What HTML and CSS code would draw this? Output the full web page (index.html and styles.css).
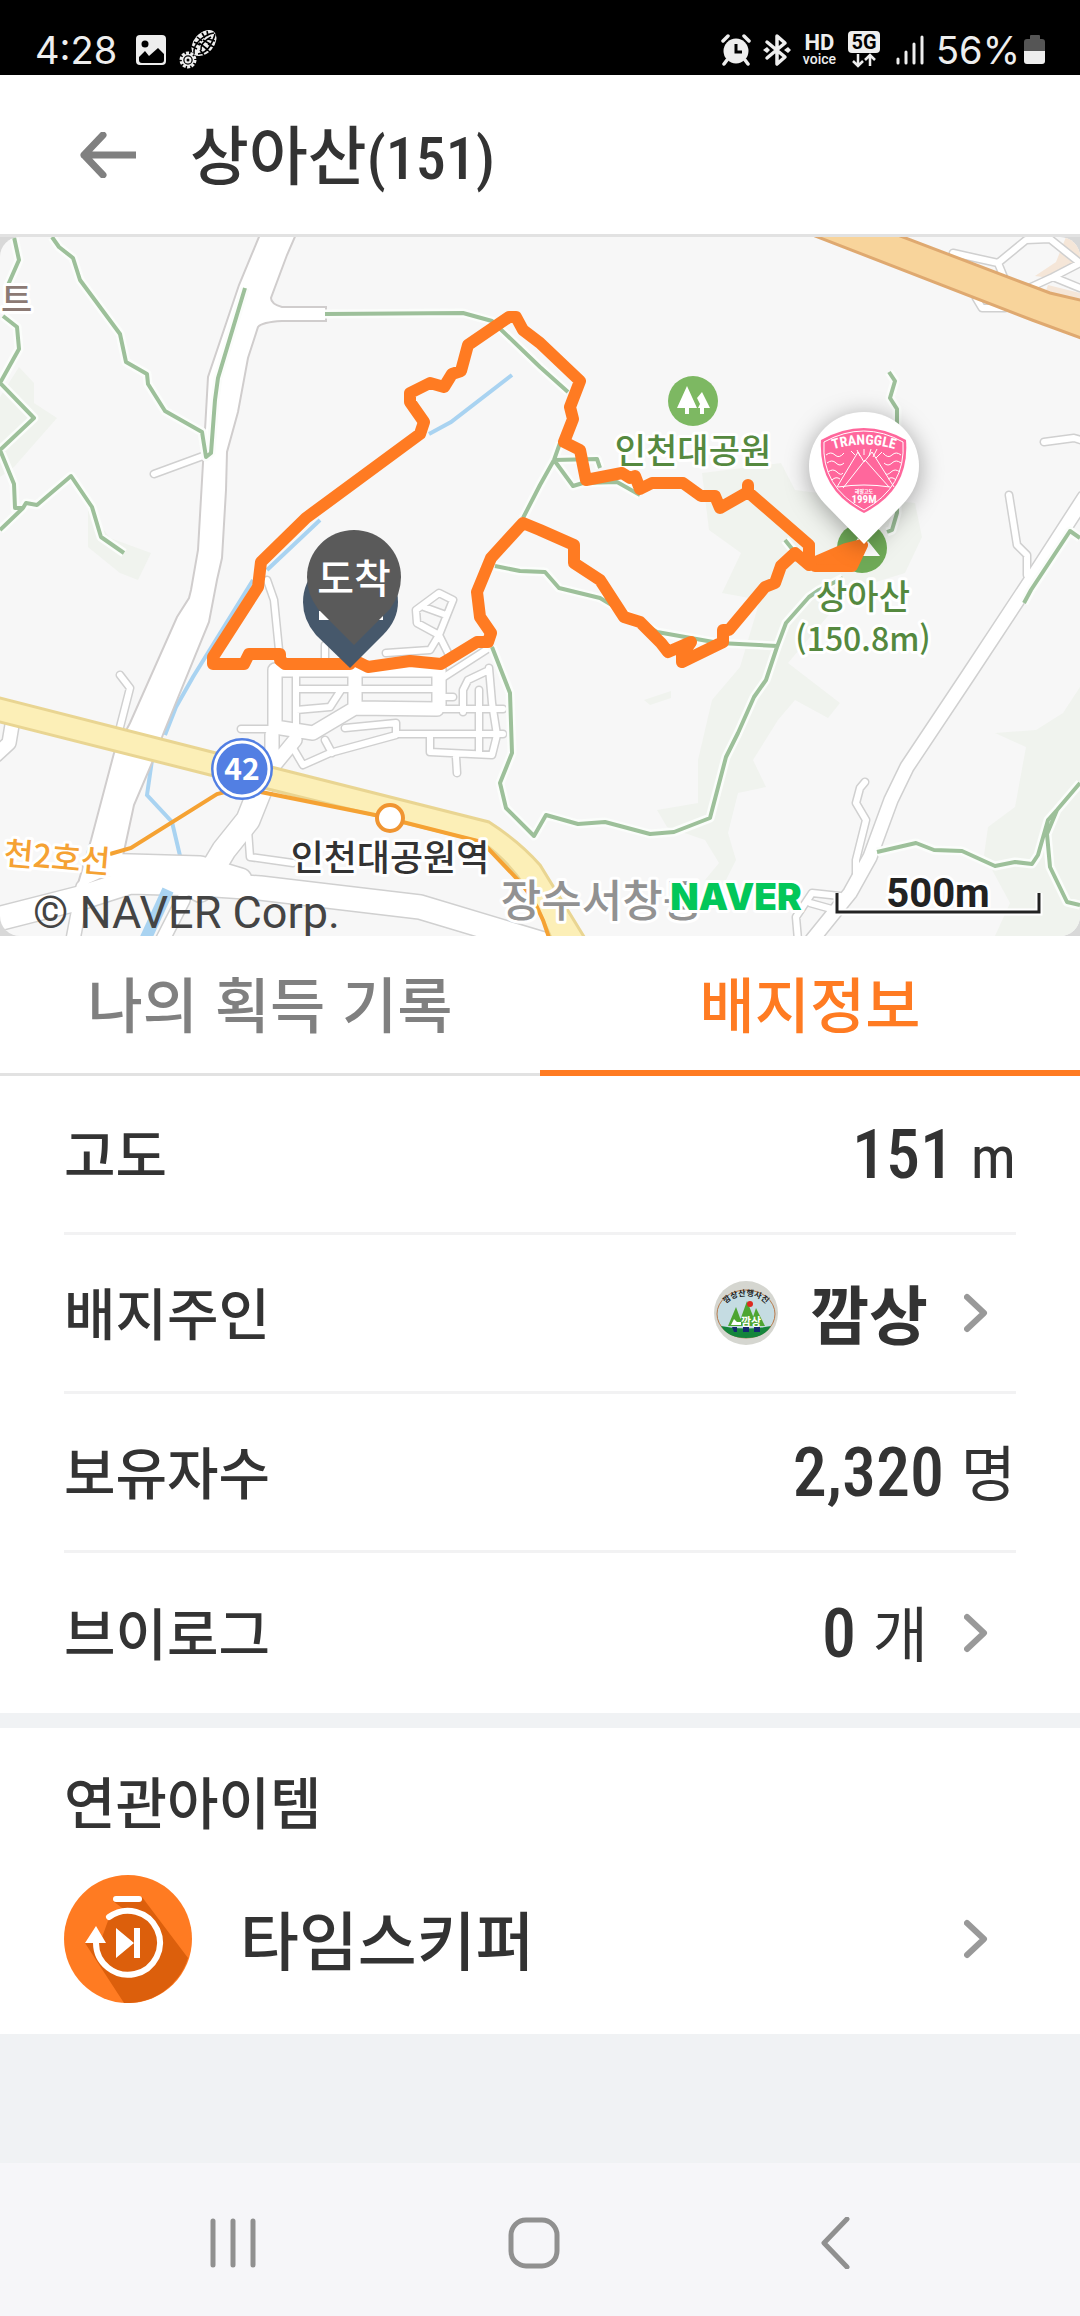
FILE: index.html
```
<!DOCTYPE html>
<html lang="ko">
  <head>
    <meta charset="UTF-8" />
    <meta name="viewport" content="width=device-width, initial-scale=1.0" />
    <title>상아산(151)</title>
    <link rel="stylesheet" href="styles.css" />
  </head>
  <body>
    <div class="statusbar">
      <div class="status-group">
        <span class="status-text">4:28</span>
        <svg class="status-image" width="32" height="32" viewBox="0 0 32 32">
          <rect x="1" y="1" width="30" height="30" rx="4" fill="#eee" />
          <circle cx="10" cy="10" r="3.5" fill="#000" />
          <path d="M4 23l6-6 4 5 9-8 6 6v6q0 3-3 3H7q-3 0-3-3z" fill="#000" />
        </svg>
        <svg width="40" height="40" viewBox="0 0 40 40">
          <ellipse cx="25" cy="13" rx="10" ry="15" transform="rotate(42 25 13)" fill="#eee" />
          <g fill="none" stroke="#000" stroke-width="1.6">
            <path d="M15 24q-1-8 6-14t14-7M19 24q8-1 12-8t5-12M22 20q-1-7 10-13M12 16l6 3M15 12l6 3M18 7l5 4M23 3l3 5M28 1l1 5M36 11l-7-2M35 17l-6-3M31 22l-5-4M25 25l-4-5M20 13l8 6M24 10l7 4" />
          </g>
          <circle cx="9" cy="30" r="7" fill="none" stroke="#eee" stroke-width="3" stroke-dasharray="3 1.4" />
          <circle cx="9" cy="30" r="5.5" fill="none" stroke="#eee" stroke-width="1.5" />
          <circle cx="9" cy="30" r="2.5" fill="none" stroke="#eee" stroke-width="2" />
        </svg>
      </div>
      <div class="status-group">
        <svg width="30" height="32" viewBox="0 0 30 32">
          <circle cx="15" cy="17" r="12.5" fill="#eee" />
          <path d="M2 7l5-5M28 7l-5-5M6 26l-3 4M24 26l3 4" stroke="#eee" stroke-width="3.5" stroke-linecap="round" />
          <path d="M15 10v8h6" fill="none" stroke="#000" stroke-width="3" />
        </svg>
        <svg width="28" height="34" viewBox="0 0 28 34">
          <path d="M4 9l18 15-8 7V3l8 7L4 25" fill="none" stroke="#eee" stroke-width="3.5" stroke-linejoin="round" stroke-linecap="round" />
          <path d="M0 17l4-3 3 3-3 3zM21 17l4-3 3 3-3 3z" fill="#eee" />
        </svg>
        <span class="hd-voice"><b>HD</b><span>voice</span></span>
        <svg width="32" height="38" viewBox="0 0 32 38">
          <rect width="32" height="22" rx="4" fill="#eee" />
          <text x="16" y="18" class="net-label">5G</text>
          <path d="M10 23v12M5 30l5 5 5-5M22 35V24M17 29l5-5 5 5" fill="none" stroke="#eee" stroke-width="2.5" />
        </svg>
        <svg class="signal" width="28" height="30" viewBox="0 0 28 30">
          <path d="M2 24v4M10 17v11M18 9v19M26 2v26" stroke="#eee" stroke-width="3" stroke-linecap="round" />
        </svg>
        <span class="status-text percent">56%</span>
        <svg width="22" height="30" viewBox="0 0 22 30">
          <path d="M6 4V1q0-1 1-1h8q1 0 1 1v3h2q3 0 3 3v9H0V7q0-3 3-3z" fill="#555" />
          <path d="M0 16h21v10q0 3-3 3H3q-3 0-3-3z" fill="#eee" />
        </svg>
      </div>
    </div>

    <header class="header">
      <button type="button" class="back" aria-label="뒤로">
        <svg width="56" height="46" viewBox="0 0 56 46">
          <path d="M4 23h52M23 3L4 23l19 20" fill="none" stroke="#808080" stroke-width="7" stroke-linecap="round" stroke-linejoin="round" />
        </svg>
      </button>
      <h1 class="title">상아산<span class="num">(151)</span></h1>
    </header>

    <div class="map">
      <svg class="map-svg" viewBox="0 237 1080 699">
        <defs>
          <path id="streets-thin" d="M154 474L203 456M120 675L130 688L120 727M267 580L274 600L279 650M296 673V730M296 689H434M296 710L330 707L341 690M241 729H275M345 728L396 723V735L330 753L303 765L293 748M325 740L332 753M396 734H503M437 709H503M479 690V753M463 712V690L468 680L489 670M489 668L492 703L497 735L492 755L430 752V735M456 757L457 773M439 593L453 600L439 635L417 623L416 610ZM424 607L446 615M448 653L439 635L430 650L386 653M489 648L444 677M325 645V660M439 697H453M248 830L250 857L293 863M1009 495L1017 545L1027 555V575M1044 442L1074 438L1084 441M865 782L860 788L856 803L866 820L856 860V885M798 940L796 917L812 893L840 896M810 903L835 910M953 253L998 263L1026 240L1050 239L1080 263L1053 277L1029 288M998 263L1005 280M1053 277L1080 288M976 298L982 308H1005" />
          <path id="streets-mid" d="M275 670V727L313 733L355 708L437 709M275 670H439V705M355 670V708M295 740L272 768M272 735V768M1084 498L1029 583L967 677L907 767L891 800L870 857L850 893L812 940M12 725L9 743L-4 755M83 887L72 945M183 900L160 945" />
          <path id="streets-wide" d="M262 785L248 820L224 850L200 890M-10 921L80 898L130 882L200 884L260 888L420 907L560 949M95 865L200 868L240 880" />
          <path id="trails" d="M14 237L19 260L8 285M3 316L17 327L19 349L0 383L34 418L0 450L14 484L15 508H23L26 503L37 505L71 476L92 507L101 537L124 553M23 508L0 530M52 237L59 247L73 258L80 280L120 334L126 362L147 374L148 384L165 411L202 432L206 457L211 453L215 400L218 378L245 288M325 314L463 313L492 321L540 367L568 392M523 518L540 485L554 460L560 443M554 460L597 459L600 468M554 460L573 486L583 483L617 482L640 495M495 566L520 571L545 572L559 588L600 598L657 632L719 643L777 646M843 578L819 590L809 597L786 623L777 647L766 680L754 697L738 733L726 757L710 818L674 832L650 834L605 822L578 824L546 815L534 836L506 808L500 783L512 753L510 693L492 647M889 372L895 381L890 398L897 409V513L892 530L887 532M877 852L916 843L934 850L962 851L995 866L1015 862L1032 864L1038 855L1048 820L1057 810L1080 783M1057 810L1047 834L1050 867L1067 902L1080 905M1080 538L1070 531L1031 590L1024 603M785 540L797 555" />
        </defs>

        <rect y="237" width="1080" height="699" fill="#f7f7f7" />

        <!-- 녹지 -->
        <g fill="#f0f3ee">
          <path d="M19 367L34 383V403L57 418L14 467L0 477V397Z" />
          <path d="M88 510L110 538L151 553L138 580L120 573L88 547Z" />
          <path d="M702 473L781 463L795 490L850 497L915 503L922 537L905 573L850 590L788 663L840 703L828 718L795 700L778 720L753 760L766 787L738 793L728 833L736 860L726 880H705L719 863L705 840L667 827L657 810L698 803V760L712 700L740 667L760 600L722 593L741 553L709 530Z" />
          <path d="M1080 687L1063 713L1036 730L995 733L1026 747L1015 807L988 827L984 855L1010 903L995 936H1080Z" />
          <path d="M644 700L671 691V698L650 705Z" />
        </g>
        <path d="M1066 237H1080V263L1050 278L1035 276L1056 262ZM1048 285L1080 293V302L1045 293Z" fill="#f5e6d8" />

        <!-- 하천 -->
        <path d="M253 580L193 677L176 707L165 735M152 760L147 795L172 822L181 860M429 434L451 422L512 375M320 520L267 570" fill="none" stroke="#a9d3f1" stroke-width="4" />

        <!-- 도로 -->
        <g fill="none" stroke="#d0d0d0" stroke-linejoin="round" stroke-linecap="round">
          <use href="#streets-thin" stroke-width="9" />
          <use href="#streets-mid" stroke-width="16" />
          <use href="#streets-wide" stroke-width="26" />
        </g>
        <path d="M261 232L239 285L208 377L205 430L203 463L198 550L191 590L189 598L177 617L130 723L114 753L91 840L76 890L120 870L134 805L152 763L164 732L209 622L217 580L222 558L226 490L227 452L238 412L248 358L258 327Q262 322 282 321H326V307H282Q271 304 271 298L287 255L297 232Z" fill="#fff" stroke="#d0cdcd" stroke-width="2" />
        <g fill="none" stroke="#fff" stroke-linejoin="round" stroke-linecap="round">
          <use href="#streets-thin" stroke-width="6" />
          <use href="#streets-mid" stroke-width="13" />
          <use href="#streets-wide" stroke-width="23" />
        </g>
        <path d="M168 890L145 940" stroke="#a9d3f1" stroke-width="12" />

        <!-- 고속도로, 국도 -->
        <path d="M810 234L1032 320L1084 339V301L1050 293L1029 285L895 234Z" fill="#f8d49b" stroke="#dfa970" stroke-width="3" />
        <path d="M-4 697L212 752L489 822Q520 842 540 865L586 940H552L540 913Q520 870 482 842L272 790L210 775L-4 721Z" fill="#fcefb7" stroke="#e9d592" stroke-width="3" />

        <!-- 등산로 -->
        <use href="#trails" class="trail-halo" />
        <use href="#trails" class="trail" />

        <!-- 지하철 -->
        <path d="M110 854L131 848L217 794L241 788L375 815L482 842L520 882Q540 905 549 938" fill="none" stroke="#f5a233" stroke-width="4" />
        <circle cx="390" cy="818" r="13" fill="#fff" stroke="#f09531" stroke-width="4" />

        <circle cx="242" cy="769" r="31" fill="#527fe3" />
        <circle cx="242" cy="769" r="27" fill="none" stroke="#fff" stroke-width="3" />
        <text class="label route-no" x="242" y="780">42</text>

        <!-- 지명 -->
        <circle cx="693" cy="401" r="25" fill="#7db862" />
        <path d="M687 386l10 22h-8v6h-4v-6h-8zM702 392l8 16h-6v6h-4v-6h-2l2-4-3-6z" fill="#fff" />
        <circle cx="862" cy="548" r="25" fill="#6faa57" />
        <path d="M846 556l12-18 6 8 4-5 12 15z" fill="#fff" />
        <text class="label place" x="693" y="463">인천대공원</text>
        <text class="label place" x="863" y="609">상아산</text>
        <text class="label place elevation" x="863" y="651">(150.8m)</text>
        <text class="label station" x="390" y="871">인천대공원역</text>
        <text class="label apt" x="1" y="312">트</text>
        <text class="label line-name" x="3" y="864" transform="rotate(5 0 864)">천2호선</text>
        <text class="label district" x="602" y="917">장수서창동</text>

        <!-- 이동 경로 -->
        <path class="track" d="M350 664H285L280 660V654H249L244 664H213V657L258 587L261 562L306 518L420 434L424 422L410 402V393L430 383L444 387L452 374L461 371L468 345L509 317H516L523 330L540 343L580 381L570 407L573 419L564 442L580 450L586 480L622 473L630 478L635 476L640 489L652 483H683L701 496H715L720 508L748 492V485V492L809 545V560L815 566H852L862 545L846 549L809 565L795 553L781 566L775 583L765 587L729 630H723V642L682 662V655L691 642L668 652L661 643L640 622L624 617L600 580L574 563V545L540 530L523 523L491 558L477 592L480 617L491 633L488 642H477L441 664L410 661L368 667L358 662" />
        <path d="M815 564L848 548L860 544L854 565Z" fill="#ff7b22" />

        <!-- 출발/도착 핀 -->
        <path d="M350 668L316 635Q303 620 303 602A47 47 0 0 1 398 602Q398 620 383 635Z" fill="#46586b" />
        <path d="M319 611h16v9h-16zM366 611h17v9h-17z" fill="#fff" />
        <path d="M354 645L318 609Q307 594 307 577A47 47 0 0 1 401 577Q401 594 390 609Z" fill="#5a5a5a" />
        <text class="label arrive" x="354" y="593">도착</text>

        <!-- 배지 핀 -->
        <path class="badge-pin" d="M864 544L825 504Q809 487 809 466A55 54 0 0 1 919 466Q919 487 903 504Z" />
        <path d="M821 440Q864 416 906 440Q910 490 864 513Q818 490 821 440Z" fill="#ff679c" />
        <path d="M824 442Q864 420 903 442Q906 487 864 510Q821 487 824 442Z" fill="none" stroke="#fff" />
        <path id="badge-arc" d="M828 451Q864 438 900 451" fill="none" />
        <text class="badge-name"><textPath href="#badge-arc" startOffset="50%">TRANGGLE</textPath></text>
        <g fill="none" stroke="#fff" stroke-width="1">
          <path d="M837 487L858 452L864 462M843 488L865 460L889 487M864 462L872 452L894 487M838 487Q864 483 890 487M826 455q5-4 9 0t9-2M827 463q5-4 9 0t8 0M828 472q5-4 9 0t6 1M832 480q4-4 8-1M901 455q-5-4-9 0t-9-2M901 463q-5-4-9 0t-8 0M900 472q-5-4-9 0t-6 1M896 480q-4-4-8-1M864 449v6M857 450l3 6M871 449l-2 7M877 449l-4 8M851 451l4 4M882 452l-6 6" />
        </g>
        <text class="badge-sub" x="864" y="493">해발고도</text>
        <text class="badge-alt" x="864" y="503">199M</text>

        <text class="label copyright" x="33" y="928">© NAVER Corp.</text>
        <text class="label naver" x="736" y="910">NAVER</text>
        <path d="M837 893V912H1039V893" fill="none" stroke="#fff" stroke-width="7" />
        <path d="M837 893V912H1039V893" fill="none" stroke="#222" stroke-width="3" />
        <text class="label scale" x="938" y="907">500m</text>
      </svg>
    </div>

    <div class="tabs" role="tablist">
      <button type="button" class="tab" role="tab" aria-selected="false">나의 획득 기록</button>
      <button type="button" class="tab active" role="tab" aria-selected="true">배지정보</button>
    </div>

    <main class="content">
      <section class="info">
        <div class="row">
          <span class="row-label">고도</span>
          <span class="row-value"><b class="num">151</b> <span class="unit">m</span></span>
        </div>
        <a href="#owner" class="row">
          <span class="row-label">배지주인</span>
          <span class="row-value owner">
            <svg class="avatar" width="64" height="64" viewBox="0 0 64 64">
              <circle cx="32" cy="32" r="32" fill="#d5d6d0" />
              <ellipse cx="32" cy="33" rx="29" ry="24" fill="#c5dce2" stroke="#b87a4c" />
              <path d="M7 45Q32 50 57 45Q50 57 32 57T7 45Z" fill="#15853c" />
              <path d="M22 26L29 45H14ZM33 20L43 45H24ZM42 27L51 45H36Z" fill="#4da532" />
              <circle cx="36" cy="23" r="3" fill="#dd2a20" />
              <path d="M20 38l3 3h4v3H17z" fill="#fff" />
              <path d="M18 46h5v5h-3zM29 46h6v5h-6zM40 46h6v5h-6z" fill="#14296f" />
              <path id="avatar-arc" d="M8 32Q12 15 32 15T56 32" fill="none" />
              <text class="avatar-ring"><textPath href="#avatar-arc" startOffset="50%">깜상산행사진</textPath></text>
              <text class="avatar-name" x="37" y="45">깜상</text>
            </svg>
            <b>깜상</b>
          </span>
          <svg class="chevron" width="24" height="40" viewBox="0 0 24 40">
            <path d="M3 4l17 16L3 36" />
          </svg>
        </a>
        <div class="row">
          <span class="row-label">보유자수</span>
          <span class="row-value"><span class="num">2,320</span> 명</span>
        </div>
        <a href="#vlog" class="row">
          <span class="row-label">브이로그</span>
          <span class="row-value"><span class="num">0</span> 개</span>
          <svg class="chevron" width="24" height="40" viewBox="0 0 24 40">
            <path d="M3 4l17 16L3 36" />
          </svg>
        </a>
      </section>

      <section class="related">
        <h2 class="related-title">연관아이템</h2>
        <a href="#item" class="item">
          <svg width="128" height="128" viewBox="0 0 128 128">
            <circle cx="64" cy="64" r="64" fill="#ff7b22" />
            <path d="M78 22L124 83A64 64 0 0 1 60 128L21 68H36L45 43L62 36L49 26Z" fill="#dc5f0c" />
            <g fill="none" stroke="#fff" stroke-width="6" stroke-linecap="round">
              <path d="M52 24h23" />
              <path d="M45 42A32 32 0 1 1 32 68" />
            </g>
            <path d="M21 68l11-17 10 17zM52 53l18 15-18 15zM70 53h6v30h-6z" fill="#fff" />
          </svg>
          <span class="item-name">타임스키퍼</span>
          <svg class="chevron" width="24" height="40" viewBox="0 0 24 40">
            <path d="M3 4l17 16L3 36" />
          </svg>
        </a>
      </section>
    </main>

    <nav class="navbar">
      <button type="button" aria-label="최근 앱">
        <svg width="50" height="52" viewBox="0 0 50 52">
          <path d="M5 4v44M25 4v44M45 4v44" />
        </svg>
      </button>
      <button type="button" aria-label="홈">
        <svg width="52" height="52" viewBox="0 0 52 52">
          <rect x="3" y="3" width="46" height="46" rx="15" />
        </svg>
      </button>
      <button type="button" aria-label="뒤로 가기">
        <svg width="30" height="52" viewBox="0 0 30 52">
          <path d="M27 2L4 26l23 24" />
        </svg>
      </button>
    </nav>
  </body>
</html>
```
FILE: styles.css
```
:root {
  --point: #ff7b22;
  --text: #333;
  --line: #e2e2e2;
  --line-light: #f2f2f3;
  --bg: #f0f2f4;
  --font: "Noto Sans CJK KR", "Roboto", sans-serif;
  --font-num: "Roboto Condensed", "Roboto", sans-serif;
}

* {
  box-sizing: border-box;
}

body {
  margin: 0;
  min-height: 100vh;
  display: flex;
  flex-direction: column;
  background-color: var(--bg);
  color: var(--text);
  font-family: var(--font);
  font-weight: 500;
}

svg {
  display: block;
  flex-shrink: 0;
}

a {
  color: inherit;
  text-decoration: none;
}

button {
  border: none;
  background: none;
  padding: 0;
  font-family: inherit;
  font-weight: inherit;
  cursor: pointer;
}

/* 상태바 */
.statusbar {
  height: 75px;
  padding: 24px 34px 0 35px;
  display: flex;
  justify-content: space-between;
  background-color: #000;
  color: #eee;
}

.status-group {
  display: flex;
  align-items: center;
  gap: 12px;
}

.status-text {
  font-family: "Inter", sans-serif;
  font-weight: 400;
  font-size: 38px;
  line-height: 48px;
}

.status-image {
  margin-left: 6px;
}

.hd-voice {
  display: flex;
  flex-direction: column;
  align-items: center;
  font-family: "Roboto", sans-serif;
  font-size: 14px;
  line-height: 14px;
}

.hd-voice b {
  font-size: 22px;
  line-height: 18px;
}

.net-label {
  font: 700 20px "Roboto", sans-serif;
  text-anchor: middle;
}

.signal {
  margin-left: 4px;
}

.percent {
  margin-right: -8px;
}

/* 헤더 */
.header {
  height: 162px;
  padding: 0 80px;
  display: flex;
  align-items: center;
  gap: 54px;
  background-color: #fff;
  border-bottom: 3px solid var(--line);
}

.title {
  margin: 0;
  font-size: 64px;
  line-height: 80px;
  font-weight: 500;
}

.num {
  font-family: var(--font-num);
  font-weight: 500;
}

.title .num {
  font-size: 60px;
}

/* 지도 */
.map {
  background-color: #d8d8d8;
}

.map-svg {
  width: 100%;
  height: auto;
  border-radius: 20px;
}

.trail-halo,
.trail {
  fill: none;
  stroke-linejoin: round;
}

.trail-halo {
  stroke: #fbfdfb;
  stroke-width: 9px;
}

.trail {
  stroke: #9dc09a;
  stroke-width: 4px;
}

.track {
  fill: none;
  stroke: var(--point);
  stroke-width: 12px;
  stroke-linejoin: round;
  stroke-linecap: round;
}

.label {
  font-family: var(--font);
  font-weight: 500;
  text-anchor: middle;
  paint-order: stroke;
  stroke: #fff;
  stroke-width: 6px;
  stroke-linejoin: round;
}

.place {
  font-size: 34px;
  fill: #55893f;
}

.elevation {
  font-size: 32px;
}

.station {
  font-size: 36px;
  fill: #333;
}

.apt {
  font-size: 34px;
  fill: #8c7a74;
  text-anchor: start;
}

.line-name {
  font-size: 32px;
  fill: #f5a233;
  text-anchor: start;
}

.district {
  font-size: 44px;
  fill: #929292;
}

.route-no {
  font-size: 30px;
  font-weight: 700;
  fill: #fff;
  stroke: none;
}

.arrive {
  font-size: 40px;
  fill: #fff;
  stroke: none;
}

.badge-pin {
  fill: #fff;
  filter: drop-shadow(0 4px 12px rgba(0, 0, 0, 0.35));
}

.badge-name {
  font: 700 14px var(--font-num);
  fill: #fff;
  text-anchor: middle;
}

.badge-sub {
  font: 700 5px var(--font);
  fill: #fff;
  text-anchor: middle;
}

.badge-alt {
  font: 700 11px var(--font-num);
  fill: #fff;
  text-anchor: middle;
}

.copyright {
  font-family: "Roboto", sans-serif;
  font-weight: 400;
  font-size: 45px;
  fill: #444;
  stroke: none;
  text-anchor: start;
}

.naver {
  font-family: "Inter", sans-serif;
  font-weight: 900;
  font-size: 37px;
  fill: #03c75a;
}

.scale {
  font-family: "Roboto", sans-serif;
  font-weight: 700;
  font-size: 40px;
  fill: #222;
}

/* 탭 */
.tabs {
  display: grid;
  grid-template-columns: 1fr 1fr;
  background-color: #fff;
}

.tab {
  height: 140px;
  padding-bottom: 6px;
  border-bottom: 3px solid var(--line);
  font-size: 60px;
  color: #808080;
}

.tab.active {
  border-bottom: 6px solid var(--point);
  padding-bottom: 3px;
  color: var(--point);
}

/* 배지 정보 */
.info {
  padding: 0 64px;
  background-color: #fff;
}

.row {
  height: 159px;
  display: flex;
  align-items: center;
  border-bottom: 3px solid var(--line-light);
}

.row:last-child {
  height: 160px;
  border-bottom: none;
}

.row-label {
  flex: 1;
  padding-bottom: 6px;
  font-size: 56px;
}

.row-value {
  padding-bottom: 6px;
  font-size: 60px;
  font-weight: 400;
}

.row-value .num {
  font-size: 68px;
}

.unit {
  font-family: var(--font-num);
}

.owner {
  display: flex;
  align-items: center;
  gap: 32px;
  padding-bottom: 0;
  font-size: 64px;
}

.owner b {
  padding-bottom: 4px;
}

.chevron {
  margin: 0 28px 0 36px;
  fill: none;
  stroke: #999;
  stroke-width: 6px;
  stroke-linecap: round;
  stroke-linejoin: round;
}

.avatar-ring {
  font: 700 8px var(--font);
  fill: #222;
  text-anchor: middle;
}

.avatar-name {
  font: 700 11px var(--font);
  fill: #fff;
  text-anchor: middle;
}

/* 연관아이템 */
.related {
  margin-top: 15px;
  padding: 32px 64px 31px;
  background-color: #fff;
}

.related-title {
  margin: 0 0 35px;
  font-size: 56px;
  line-height: 80px;
  font-weight: 500;
}

.item {
  display: flex;
  align-items: center;
}

.item-name {
  flex: 1;
  margin-left: 48px;
  padding-bottom: 4px;
  font-size: 64px;
  line-height: 80px;
}

/* 내비게이션 바 */
.navbar {
  height: 153px;
  margin-top: auto;
  padding: 6px 94px 0 82px;
  display: flex;
  align-items: center;
  background-color: #f6f6f9;
}

.navbar button {
  flex: 1;
  display: flex;
  justify-content: center;
}

.navbar svg {
  fill: none;
  stroke: #909090;
  stroke-width: 5px;
  stroke-linecap: round;
  stroke-linejoin: round;
}
```
